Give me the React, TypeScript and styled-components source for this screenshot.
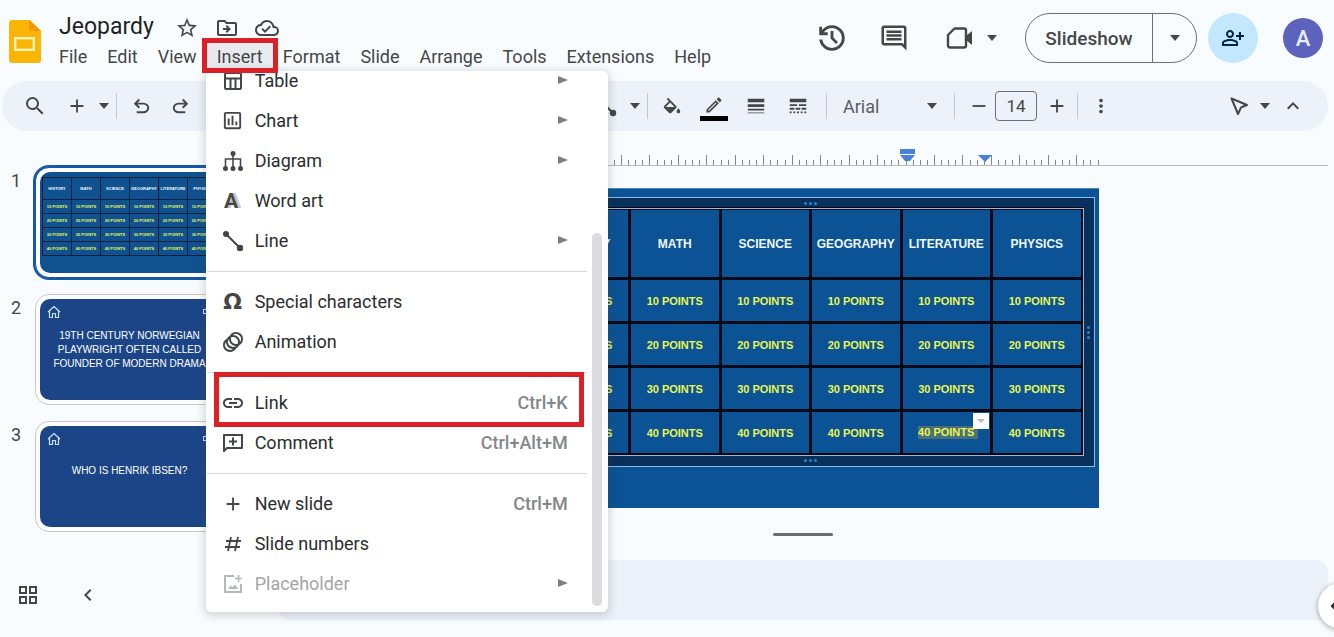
import React from "react";
import styled, { createGlobalStyle, css } from "styled-components";
import {
  MdAdd,
  MdAnimation,
  MdLineStyle,
  MdLineWeight,
  MdLink,
  MdMoreVert,
  MdOutlineCloudDone,
  MdOutlineComment,
  MdOutlineDriveFileMove,
  MdOutlineEdit,
  MdOutlineGridView,
  MdOutlineInsertChart,
  MdOutlinePersonAddAlt,
  MdRemove,
  MdSearch,
  MdStarBorder,
  MdKeyboardArrowUp,
  MdChevronLeft,
} from "react-icons/md";

const GlobalStyle = createGlobalStyle`
  *, *::before, *::after { box-sizing: border-box; }
  body {
    margin: 0;
    background: #f9fcff;
    color: #444746;
    font-family: Roboto, "Liberation Sans", sans-serif;
    overflow: hidden;
  }
  button, input, select { font: inherit; color: inherit; margin: 0; }
  button { padding: 0; border: 0; background: none; cursor: pointer; }
`;

/* ---------- icons ---------- */

const Caret = () => (
  <svg width="10" height="6" viewBox="0 0 10 6" aria-hidden="true">
    <path d="M0 0h10L5 6z" fill="#444746" />
  </svg>
);

const UndoIcon = ({ flip }: { flip?: boolean }) => (
  <svg width="23" height="23" viewBox="0 -960 960 960" fill="currentColor" aria-hidden="true">
    <path
      transform={flip ? "matrix(-1 0 0 1 960 0)" : undefined}
      d="M280-200v-80h284q63 0 109.500-40T720-420q0-60-46.500-100T564-560H312l104 104-56 56-200-200 200-200 56 56-104 104h252q97 0 169.500 63T800-420q0 94-72.500 157T564-200H280Z"
    />
  </svg>
);

const HistoryIcon = () => (
  <svg width="34" height="34" viewBox="0 -960 960 960" fill="currentColor" aria-hidden="true">
    <path d="M480-120q-138 0-240.500-91.500T122-440h82q14 104 92.500 172T480-200q117 0 198.500-81.500T760-480q0-117-81.500-198.500T480-760q-69 0-129 32t-101 88h110v80H120v-240h80v94q51-64 124.500-99T480-840q75 0 140.500 28.500t114 77q48.500 48.500 77 114T840-480q0 75-28.500 140.500t-77 114q-48.500 48.500-114 77T480-120Zm112-192L440-464v-216h80v184l128 128-56 56Z" />
  </svg>
);

const LogoIcon = () => (
  <svg width="32" height="43" viewBox="0 0 32 43" aria-hidden="true">
    <path d="M3 0h18l11 11v29a3 3 0 0 1-3 3H3a3 3 0 0 1-3-3V3a3 3 0 0 1 3-3z" fill="#fbb605" />
    <path d="M20 0l12 11h-9a3 3 0 0 1-3-3z" fill="#f09a00" />
    <rect x="6.200" y="18.200" width="18.600" height="11.600" fill="none" stroke="#fff3b8" strokeWidth="2.400" />
  </svg>
);

const CameraIcon = () => (
  <svg width="28" height="24" viewBox="0 0 28 24" aria-hidden="true">
    <path
      d="M8.500 2.500H18a2 2 0 0 1 2 2v15a2 2 0 0 1-2 2H4a2 2 0 0 1-2-2V9z"
      fill="none"
      stroke="currentColor"
      strokeWidth="2.400"
      strokeLinejoin="round"
    />
    <path d="M20 10l6-5v14l-6-5z" fill="currentColor" />
  </svg>
);

const FillIcon = () => (
  <svg width="22" height="22" viewBox="0 -3 24 24" fill="currentColor" aria-hidden="true">
    <path d="M16.560 8.940L7.620 0 6.210 1.410l2.380 2.380-5.150 5.150a1.490 1.490 0 0 0 0 2.120l5.500 5.500c.29.29.68.44 1.060.44s.77-.15 1.060-.44l5.500-5.500c.59-.58.59-1.530 0-2.120zM5.210 10L10 5.210 14.790 10H5.210zM19 11.500s-2 2.170-2 3.500c0 1.100.9 2 2 2s2-.9 2-2c0-1.330-2-3.500-2-3.500z" />
  </svg>
);

const CursorIcon = () => (
  <svg width="22" height="22" viewBox="0 0 22 22" aria-hidden="true">
    <path
      d="M3.500 3.500l15.500 6.500-5.500 2.200-.8 1-2.700 5.800z"
      fill="none"
      stroke="currentColor"
      strokeWidth="2"
      strokeLinejoin="round"
    />
  </svg>
);

const LineIcon = () => (
  <svg width="22" height="22" viewBox="0 0 22 22" fill="currentColor" aria-hidden="true">
    <path d="M4 4l14 14" stroke="currentColor" strokeWidth="2" />
    <circle cx="4" cy="4" r="3" />
    <circle cx="18" cy="18" r="3.200" />
  </svg>
);

const TableIcon = () => (
  <svg width="18" height="18" viewBox="0 0 18 18" fill="none" stroke="currentColor" strokeWidth="2" aria-hidden="true">
    <rect x="1" y="1" width="16" height="16" rx="1" />
    <path d="M1 6.500h16M6.500 6.500V17M11.500 6.500V17" />
  </svg>
);

const DiagramIcon = () => (
  <svg width="22" height="22" viewBox="0 0 22 22" fill="currentColor" aria-hidden="true">
    <path d="M3.500 17V9h15v8M11 3v14" fill="none" stroke="currentColor" strokeWidth="1.600" />
    <circle cx="11" cy="3.500" r="2.500" />
    <circle cx="3.500" cy="18.500" r="2.500" />
    <circle cx="11" cy="18.500" r="2.500" />
    <circle cx="18.500" cy="18.500" r="2.500" />
  </svg>
);

const HashIcon = () => (
  <svg width="18" height="16" viewBox="0 0 18 16" fill="none" stroke="currentColor" strokeWidth="1.800" aria-hidden="true">
    <path d="M2 5h15M1 11h15M7 1L4 15M14 1l-3 14" />
  </svg>
);

const CommentAddIcon = () => (
  <svg width="22" height="22" viewBox="0 0 22 22" fill="none" stroke="currentColor" strokeWidth="2" aria-hidden="true">
    <path d="M2 19V3h18v13H5z" strokeLinejoin="round" />
    <path d="M11 5.500v8M7 9.500h8" />
  </svg>
);

const PlaceholderIcon = () => (
  <svg width="20" height="20" viewBox="0 0 20 20" fill="none" stroke="currentColor" strokeWidth="2" aria-hidden="true">
    <path d="M11 2H2v16h16V10" />
    <path d="M15.500 1v7M12 4.500h7" strokeWidth="1.600" />
    <path d="M5 15l2.500-3.500 2 2 2.500-3 3 4.500z" fill="currentColor" stroke="none" />
  </svg>
);

const HomeIcon = () => (
  <svg width="14" height="14" viewBox="0 0 14 14" fill="none" stroke="#cfe0ff" strokeWidth="1.200" aria-hidden="true">
    <path d="M1 7l6-5.500L13 7M2.500 6v6.500h3V8.500h3v4h3V6" strokeLinejoin="round" />
  </svg>
);

const MoreArrow = () => (
  <svg width="10" height="8" viewBox="0 0 10 8" aria-hidden="true">
    <path d="M0 0l10 4-10 4z" fill="#7d8083" />
  </svg>
);

/* ---------- header ---------- */

const Header = styled.header`
  display: flex;
  align-items: flex-start;
  padding: 13px 11px 0 9px;
`;

const Logo = styled.a`
  display: block;
  margin: 7px 8px 0 0;
  line-height: 0;
`;

const TitleBlock = styled.div`
  display: flex;
  flex-direction: column;
`;

const TitleRow = styled.div`
  display: flex;
  align-items: center;
  height: 30px;
  padding: 0 10px;
  gap: 16px;
`;

const Title = styled.h1`
  margin: 0 5px 0 0;
  padding-bottom: 2px;
  font-size: 23px;
  line-height: 28px;
  font-weight: 400;
  color: #1f1f1f;
`;

const IconButton = styled.button<{ $width?: number }>`
  display: inline-flex;
  align-items: center;
  justify-content: center;
  flex: none;
  width: ${(p) => (p.$width ? `${p.$width}px` : "auto")};
`;

const MenuBar = styled.nav`
  display: flex;
`;

const MenuSlot = styled.div`
  position: relative;
`;

const MenuButton = styled.button<{ $open?: boolean }>`
  height: 26px;
  padding: 2px 10px 0;
  font-size: 18px;
  line-height: 24px;
  background: ${(p) => (p.$open ? "#e8eaef" : "transparent")};
`;

const marker = css`
  position: absolute;
  border: 5px solid #dd1f26;
  pointer-events: none;
`;

const MenuMarker = styled.span`
  ${marker}
  inset: -5px -5px -4px -5px;
  z-index: 3;
`;

const ItemMarker = styled.span`
  ${marker}
  inset: -11px 3px -4px 8px;
  z-index: 1;
`;

const Actions = styled.div`
  display: flex;
  align-items: center;
  margin-left: auto;
`;

const ActionIcons = styled.div`
  display: flex;
  align-items: center;
  gap: 22px;
  margin-right: 27px;
`;

const CallGroup = styled.div`
  display: flex;
  align-items: center;
  gap: 6px;
  padding-left: 4px;
`;

const Split = styled.div`
  display: flex;
  height: 50px;
  border: 1px solid #6d7072;
  border-radius: 25px;
  margin-right: 11px;
`;

const SplitMain = styled.button`
  width: 127px;
  font-size: 19px;
  font-weight: 500;
  border-right: 1px solid #6d7072;
`;

const ShareButton = styled.button`
  display: flex;
  align-items: center;
  justify-content: center;
  width: 50px;
  height: 50px;
  border-radius: 25px;
  background: #c2e7ff;
  color: #062344;
  margin-right: 25px;
`;

const Avatar = styled.button`
  width: 40px;
  height: 40px;
  border-radius: 20px;
  background: #5c63bd;
  color: #e9ebff;
  font-size: 22px;
  font-weight: 500;
`;

/* ---------- insert menu ---------- */

const Panel = styled.div`
  position: absolute;
  top: 28px;
  left: -1px;
  z-index: 2;
  display: flex;
  gap: 5px;
  width: 402px;
  padding-bottom: 8px;
  overflow: hidden;
  background: #fff;
  border-radius: 6px;
`;

const PanelShadow = styled.div`
  position: absolute;
  top: 28px;
  left: -1px;
  z-index: 1;
  width: 402px;
  height: 541px;
  border-radius: 6px;
  box-shadow: 0 2px 8px 2px rgba(60, 64, 67, 0.2);
`;

const ItemList = styled.div`
  width: 381px;
  margin-top: -10px;
`;

const ItemButton = styled.button<{ $muted?: boolean }>`
  position: relative;
  display: flex;
  align-items: center;
  width: 100%;
  height: 40px;
  padding: 0 19px 2px 15px;
  font-size: 18px;
  color: ${(p) => (p.$muted ? "#a3a5a8" : "#2a2d2f")};
`;

const ItemIcon = styled.span<{ $muted?: boolean }>`
  display: flex;
  justify-content: center;
  width: 24px;
  margin-right: 10px;
  padding-top: 1px;
  color: ${(p) => (p.$muted ? "#b4b6b8" : "#444746")};
`;

const Shortcut = styled.span`
  margin-left: auto;
  font-weight: 500;
  color: #84878a;
`;

const Submenu = styled.span`
  display: flex;
  margin-left: auto;
`;

const Divider = styled.hr`
  height: 1px;
  margin: 10px 0 10px 1px;
  border: 0;
  background: #d5d7da;
`;

const ScrollBar = styled.div`
  align-self: flex-end;
  width: 10px;
  height: 373px;
  margin-bottom: -2px;
  border-radius: 5px;
  background: #dadadf;
`;

const SymbolIcon = styled.span`
  font: bold 22px "DejaVu Sans", sans-serif;
`;

const WordArtIcon = styled.span`
  padding-right: 3px;
  font: bold 21px Roboto, sans-serif;
  text-shadow: 3px 0 #c4c6c8;
`;

/* ---------- toolbar ---------- */

const Toolbar = styled.div`
  display: flex;
  align-items: center;
  gap: 4px;
  height: 50px;
  margin: 12px 6px 0 2px;
  padding: 0 16px 0 13px;
  border-radius: 25px;
  background: #edf1fa;
`;

const Rule = styled.span`
  flex: none;
  width: 1px;
  height: 26px;
  margin: 0 3px;
  background: #c4c7cc;
`;

const HiddenTools = styled.div`
  flex: none;
  width: 380px;
`;

const Spacer = styled.div`
  flex: 1;
`;

const PenButton = styled.button`
  display: flex;
  flex-direction: column;
  align-items: center;
  width: 42px;
  height: 30px;
  justify-content: space-between;
  padding-top: 4px;
`;

const PenColor = styled.span`
  width: 28px;
  height: 5px;
  background: #000;
`;

const FontField = styled.label`
  display: flex;
  align-items: center;
  flex: none;
  width: 113px;
  padding: 0 10px 0 9px;
`;

const FontSelect = styled.select`
  flex: 1;
  min-width: 0;
  padding: 0;
  border: 0;
  appearance: none;
  background: none;
  font-size: 18px;
  color: #5a5d60;
`;

const SizeGroup = styled.div`
  display: flex;
  align-items: center;
`;

const SizeInput = styled.input`
  width: 42px;
  height: 30px;
  margin-right: 7px;
  padding: 0;
  border: 1px solid #6d7072;
  border-radius: 4px;
  background: none;
  font-size: 17px;
  text-align: center;
`;

/* ---------- workspace ---------- */

const Workspace = styled.div`
  display: grid;
  grid-template-columns: 278px minmax(0, 1fr);
`;

const Filmstrip = styled.aside`
  display: flex;
  flex-direction: column;
  padding-top: 36px;
`;

const SlideList = styled.ol`
  display: flex;
  flex-direction: column;
  gap: 16px;
  margin: 0;
  padding: 0;
  list-style: none;
`;

const SlideRow = styled.li`
  display: flex;
`;

const SlideNumber = styled.span`
  width: 35px;
  padding-left: 11px;
  font-size: 18px;
  line-height: 28px;
`;

const ThumbFrame = styled.div<{ $active?: boolean }>`
  width: 191px;
  height: 111px;
  padding: 4px;
  border: 1px solid ${(p) => (p.$active ? "#1558a8" : "#c9c8c8")};
  border-radius: 14px;
  background: #fff;
  box-shadow: ${(p) => (p.$active ? "0 0 0 2px #1558a8" : "none")};
`;

const Thumb = styled.div<{ $tone: string }>`
  position: relative;
  height: 101px;
  padding: ${(p) => (p.$tone === "board" ? "5px 4px 0 2px" : "0")};
  border-radius: 10px;
  overflow: hidden;
  background: ${(p) => (p.$tone === "board" ? "#10528f" : "#1c4587")};
`;

const ThumbCorners = styled.div`
  display: flex;
  align-items: center;
  justify-content: space-between;
  padding: 5px 8px 0 7px;
  height: 20px;
`;

const ThumbTag = styled.span`
  width: 10px;
  height: 5px;
  border: 1px solid #cfe0ff;
`;

const ThumbText = styled.p<{ $single?: boolean }>`
  margin: ${(p) => (p.$single ? "18px" : "10px")} 2px 0 0;
  font: 10px/14px "Liberation Sans", Arial, sans-serif;
  text-align: center;
  color: #fff;
`;

const FilmFooter = styled.div`
  display: flex;
  align-items: center;
  gap: 36px;
  padding: 51px 0 0 16px;
`;

const Board = styled.table<{ $small?: boolean }>`
  width: 100%;
  table-layout: fixed;
  border-collapse: collapse;
  font-family: "Liberation Sans", Arial, sans-serif;
  font-weight: 700;
  text-align: center;

  th, td {
    padding: 0;
    border: ${(p) => (p.$small ? "1px solid #04203f" : "3px solid #020a18")};
  }
  th {
    height: ${(p) => (p.$small ? "22px" : "70px")};
    font-size: ${(p) => (p.$small ? "4px" : "12px")};
    color: #f0f8ff;
  }
  td {
    height: ${(p) => (p.$small ? "14px" : "44px")};
    font-size: ${(p) => (p.$small ? "4px" : "11px")};
    color: #e9f653;
  }
`;

const Main = styled.main`
  display: flex;
  flex-direction: column;
  padding: 15px 6px 17px 0;
`;

const Ruler = styled.div`
  display: flex;
  justify-content: center;
  padding-left: 22px;
  border-bottom: 1px solid #b9bcbf;
`;

const Stage = styled.div`
  display: flex;
  justify-content: center;
  padding: 22px 0 0 22px;
`;

const Slide = styled.section`
  width: 569px;
  height: 320px;
  padding-top: 8px;
  border-top: 1px solid #4a86bd;
  background: #0b5394;
`;

const Selection = styled.div`
  position: relative;
  width: 565px;
  padding: 9px 10px 10px 7px;
  border: 1px solid #8bbdec;
  background: #09305a;
`;

const TableEdge = styled.div`
  position: relative;
  background: #0b5394;

  &::after {
    content: "";
    position: absolute;
    inset: 1px 0 0 0;
    border: 1px solid #9fb6cc;
    pointer-events: none;
  }
`;

const Grip = styled.span<{ $side: "top" | "bottom" | "right" }>`
  position: absolute;
  display: flex;
  gap: 2px;
  ${(p) =>
    p.$side === "right"
      ? "right: 4px; top: 128px; flex-direction: column;"
      : `left: 273px; ${p.$side}: 4px;`}

  i {
    width: 3px;
    height: 3px;
    border-radius: 2px;
    background: #2f7fd6;
  }
`;

const SelectedCell = styled.div`
  position: relative;
`;

const Highlight = styled.span`
  display: inline-block;
  line-height: 13px;
  padding-right: 4px;
  margin-right: -4px;
  background: #4b7077;
`;

const CellMenu = styled.button`
  position: absolute;
  top: -13px;
  right: 1px;
  display: flex;
  align-items: center;
  justify-content: center;
  width: 16px;
  height: 16px;
  background: #fff;
`;

const Handle = styled.div`
  width: 60px;
  height: 3px;
  margin: 25px auto 24px;
  border-radius: 2px;
  background: #6a6d70;
`;

const Notes = styled.div`
  height: 60px;
  border-radius: 12px;
  background: #edf1fa;
`;

const SideToggle = styled.button`
  position: fixed;
  right: -30px;
  bottom: 8px;
  width: 46px;
  height: 46px;
  padding-left: 13px;
  border-radius: 23px;
  background: #fff;
  box-shadow: 0 1px 5px rgba(60, 64, 67, 0.5);
  text-align: left;
  line-height: 0;
`;

/* ---------- data ---------- */

const subjects = ["HISTORY", "MATH", "SCIENCE", "GEOGRAPHY", "LITERATURE", "PHYSICS"];
const scores = [10, 20, 30, 40];
const menusBefore = ["File", "Edit", "View"];
const menusAfter = ["Format", "Slide", "Arrange", "Tools", "Extensions", "Help"];

type Item = {
  label: string;
  icon: React.ReactNode;
  shortcut?: string;
  submenu?: boolean;
  muted?: boolean;
  marked?: boolean;
};

const groups: Item[][] = [
  [
    { label: "Table", icon: <TableIcon />, submenu: true },
    { label: "Chart", icon: <MdOutlineInsertChart size={23} />, submenu: true },
    { label: "Diagram", icon: <DiagramIcon />, submenu: true },
    { label: "Word art", icon: <WordArtIcon>A</WordArtIcon> },
    { label: "Line", icon: <LineIcon />, submenu: true },
  ],
  [
    { label: "Special characters", icon: <SymbolIcon>Ω</SymbolIcon> },
    { label: "Animation", icon: <MdAnimation size={24} /> },
  ],
  [
    { label: "Link", icon: <MdLink size={24} />, shortcut: "Ctrl+K", marked: true },
    { label: "Comment", icon: <CommentAddIcon />, shortcut: "Ctrl+Alt+M" },
  ],
  [
    { label: "New slide", icon: <MdAdd size={22} />, shortcut: "Ctrl+M" },
    { label: "Slide numbers", icon: <HashIcon /> },
    { label: "Placeholder", icon: <PlaceholderIcon />, submenu: true, muted: true },
  ],
];

/* ---------- pieces ---------- */

function InsertMenu() {
  return (
    <>
      <PanelShadow />
      <Panel role="menu">
        <ItemList>
          {groups.map((group, g) => (
            <React.Fragment key={g}>
              {g > 0 && <Divider />}
              {group.map((item) => (
                <ItemButton key={item.label} role="menuitem" $muted={item.muted}>
                  {item.marked && <ItemMarker />}
                  <ItemIcon $muted={item.muted}>{item.icon}</ItemIcon>
                  {item.label}
                  {item.shortcut && <Shortcut>{item.shortcut}</Shortcut>}
                  {item.submenu && (
                    <Submenu>
                      <MoreArrow />
                    </Submenu>
                  )}
                </ItemButton>
              ))}
            </React.Fragment>
          ))}
        </ItemList>
        <ScrollBar />
      </Panel>
    </>
  );
}

function PointsBoard({ small }: { small?: boolean }) {
  return (
    <Board $small={small}>
      <thead>
        <tr>
          {subjects.map((s) => (
            <th key={s}>{s}</th>
          ))}
        </tr>
      </thead>
      <tbody>
        {scores.map((score) => (
          <tr key={score}>
            {subjects.map((s) => (
              <td key={s}>
                {!small && score === 40 && s === "LITERATURE" ? (
                  <SelectedCell>
                    <Highlight>{score} POINTS</Highlight>
                    <CellMenu aria-label="Cell options">
                      <svg width="8" height="4" viewBox="0 0 8 4" aria-hidden="true">
                        <path d="M0 0h8L4 4z" fill="#b9bcbf" />
                      </svg>
                    </CellMenu>
                  </SelectedCell>
                ) : (
                  `${score} POINTS`
                )}
              </td>
            ))}
          </tr>
        ))}
      </tbody>
    </Board>
  );
}

function RulerScale() {
  const origin = 377;
  const step = 569 / 80;
  const ticks: React.ReactNode[] = [];
  for (let i = -53; i <= 27; i++) {
    const x = Math.floor(origin + i * step) - 0.5;
    ticks.push(<path key={i} d={`M${x} 19V${i % 4 === 0 ? 9 : 14}`} />);
  }
  return (
    <svg width="569" height="19" viewBox="0 0 569 19" aria-hidden="true">
      <g stroke="#85888b" fill="none">
        {ticks}
      </g>
      <path d="M370 3h15v5h-15zM370 9h15l-5 6h-5zM448 9h14l-7 7z" fill="#4a80d9" />
    </svg>
  );
}

const Grips = ({ side }: { side: "top" | "bottom" | "right" }) => (
  <Grip $side={side}>
    <i />
    <i />
    <i />
  </Grip>
);

export default function App() {
  return (
    <>
      <GlobalStyle />
      <Header>
        <Logo href="#" aria-label="Slides home">
          <LogoIcon />
        </Logo>
        <TitleBlock>
          <TitleRow>
            <Title>Jeopardy</Title>
            <IconButton aria-label="Star">
              <MdStarBorder size={24} />
            </IconButton>
            <IconButton aria-label="Move">
              <MdOutlineDriveFileMove size={24} />
            </IconButton>
            <IconButton aria-label="Saved">
              <MdOutlineCloudDone size={24} />
            </IconButton>
          </TitleRow>
          <MenuBar>
            {menusBefore.map((m) => (
              <MenuButton key={m}>{m}</MenuButton>
            ))}
            <MenuSlot>
              <MenuButton $open aria-expanded="true">
                Insert
              </MenuButton>
              <MenuMarker />
              <InsertMenu />
            </MenuSlot>
            {menusAfter.map((m) => (
              <MenuButton key={m}>{m}</MenuButton>
            ))}
          </MenuBar>
        </TitleBlock>
        <Actions>
          <ActionIcons>
            <IconButton $width={40} aria-label="History">
              <HistoryIcon />
            </IconButton>
            <IconButton $width={40} aria-label="Comments">
              <MdOutlineComment size={30} />
            </IconButton>
            <CallGroup>
              <IconButton $width={40} aria-label="Call">
                <CameraIcon />
              </IconButton>
              <IconButton $width={12} aria-label="Call options">
                <Caret />
              </IconButton>
            </CallGroup>
          </ActionIcons>
          <Split>
            <SplitMain>Slideshow</SplitMain>
            <IconButton $width={43} aria-label="Slideshow options">
              <Caret />
            </IconButton>
          </Split>
          <ShareButton aria-label="Share">
            <MdOutlinePersonAddAlt size={24} />
          </ShareButton>
          <Avatar>A</Avatar>
        </Actions>
      </Header>

      <Toolbar role="toolbar">
        <IconButton $width={40} aria-label="Search">
          <MdSearch size={24} />
        </IconButton>
        <IconButton $width={36} aria-label="Add slide">
          <MdAdd size={22} />
        </IconButton>
        <IconButton $width={10} aria-label="Layouts">
          <Caret />
        </IconButton>
        <Rule />
        <IconButton $width={34} aria-label="Undo">
          <UndoIcon />
        </IconButton>
        <IconButton $width={36} aria-label="Redo">
          <UndoIcon flip />
        </IconButton>
        <HiddenTools />
        <IconButton $width={40} aria-label="Line">
          <LineIcon />
        </IconButton>
        <IconButton $width={10} aria-label="Line options">
          <Caret />
        </IconButton>
        <Rule />
        <IconButton $width={34} aria-label="Fill colour">
          <FillIcon />
        </IconButton>
        <PenButton aria-label="Border colour">
          <MdOutlineEdit size={20} />
          <PenColor />
        </PenButton>
        <IconButton $width={34} aria-label="Border weight">
          <MdLineWeight size={22} />
        </IconButton>
        <IconButton $width={42} aria-label="Border dash">
          <MdLineStyle size={22} />
        </IconButton>
        <Rule />
        <FontField>
          <FontSelect aria-label="Font" defaultValue="Arial">
            <option>Arial</option>
          </FontSelect>
          <Caret />
        </FontField>
        <Rule />
        <SizeGroup>
          <IconButton $width={33} aria-label="Smaller">
            <MdRemove size={22} />
          </IconButton>
          <SizeInput aria-label="Font size" defaultValue="14" />
          <IconButton $width={26} aria-label="Larger">
            <MdAdd size={22} />
          </IconButton>
        </SizeGroup>
        <Rule />
        <IconButton $width={32} aria-label="More">
          <MdMoreVert size={22} />
        </IconButton>
        <Spacer />
        <IconButton $width={34} aria-label="Pointer">
          <CursorIcon />
        </IconButton>
        <IconButton $width={10} aria-label="Mode">
          <Caret />
        </IconButton>
        <IconButton $width={38} aria-label="Collapse">
          <MdKeyboardArrowUp size={24} />
        </IconButton>
      </Toolbar>

      <Workspace>
        <Filmstrip>
          <SlideList>
            <SlideRow>
              <SlideNumber>1</SlideNumber>
              <ThumbFrame $active>
                <Thumb $tone="board">
                  <PointsBoard small />
                </Thumb>
              </ThumbFrame>
            </SlideRow>
            <SlideRow>
              <SlideNumber>2</SlideNumber>
              <ThumbFrame>
                <Thumb $tone="question">
                  <ThumbCorners>
                    <HomeIcon />
                    <ThumbTag />
                  </ThumbCorners>
                  <ThumbText>
                    19TH CENTURY NORWEGIAN
                    <br />
                    PLAYWRIGHT OFTEN CALLED
                    <br />
                    FOUNDER OF MODERN DRAMA
                  </ThumbText>
                </Thumb>
              </ThumbFrame>
            </SlideRow>
            <SlideRow>
              <SlideNumber>3</SlideNumber>
              <ThumbFrame>
                <Thumb $tone="question">
                  <ThumbCorners>
                    <HomeIcon />
                    <ThumbTag />
                  </ThumbCorners>
                  <ThumbText $single>WHO IS HENRIK IBSEN?</ThumbText>
                </Thumb>
              </ThumbFrame>
            </SlideRow>
          </SlideList>
          <FilmFooter>
            <IconButton aria-label="Grid view">
              <MdOutlineGridView size={24} />
            </IconButton>
            <IconButton aria-label="Hide filmstrip">
              <MdChevronLeft size={24} />
            </IconButton>
          </FilmFooter>
        </Filmstrip>
        <Main>
          <Ruler>
            <RulerScale />
          </Ruler>
          <Stage>
            <Slide>
              <Selection>
                <TableEdge>
                  <PointsBoard />
                </TableEdge>
                <Grips side="top" />
                <Grips side="bottom" />
                <Grips side="right" />
              </Selection>
            </Slide>
          </Stage>
          <Handle />
          <Notes />
        </Main>
      </Workspace>
      <SideToggle aria-label="Show side panel">
        <svg width="6" height="8" viewBox="0 0 6 8" aria-hidden="true">
          <path d="M5 0L1 4l4 4" fill="none" stroke="#202124" strokeWidth="2" />
        </svg>
      </SideToggle>
    </>
  );
}
